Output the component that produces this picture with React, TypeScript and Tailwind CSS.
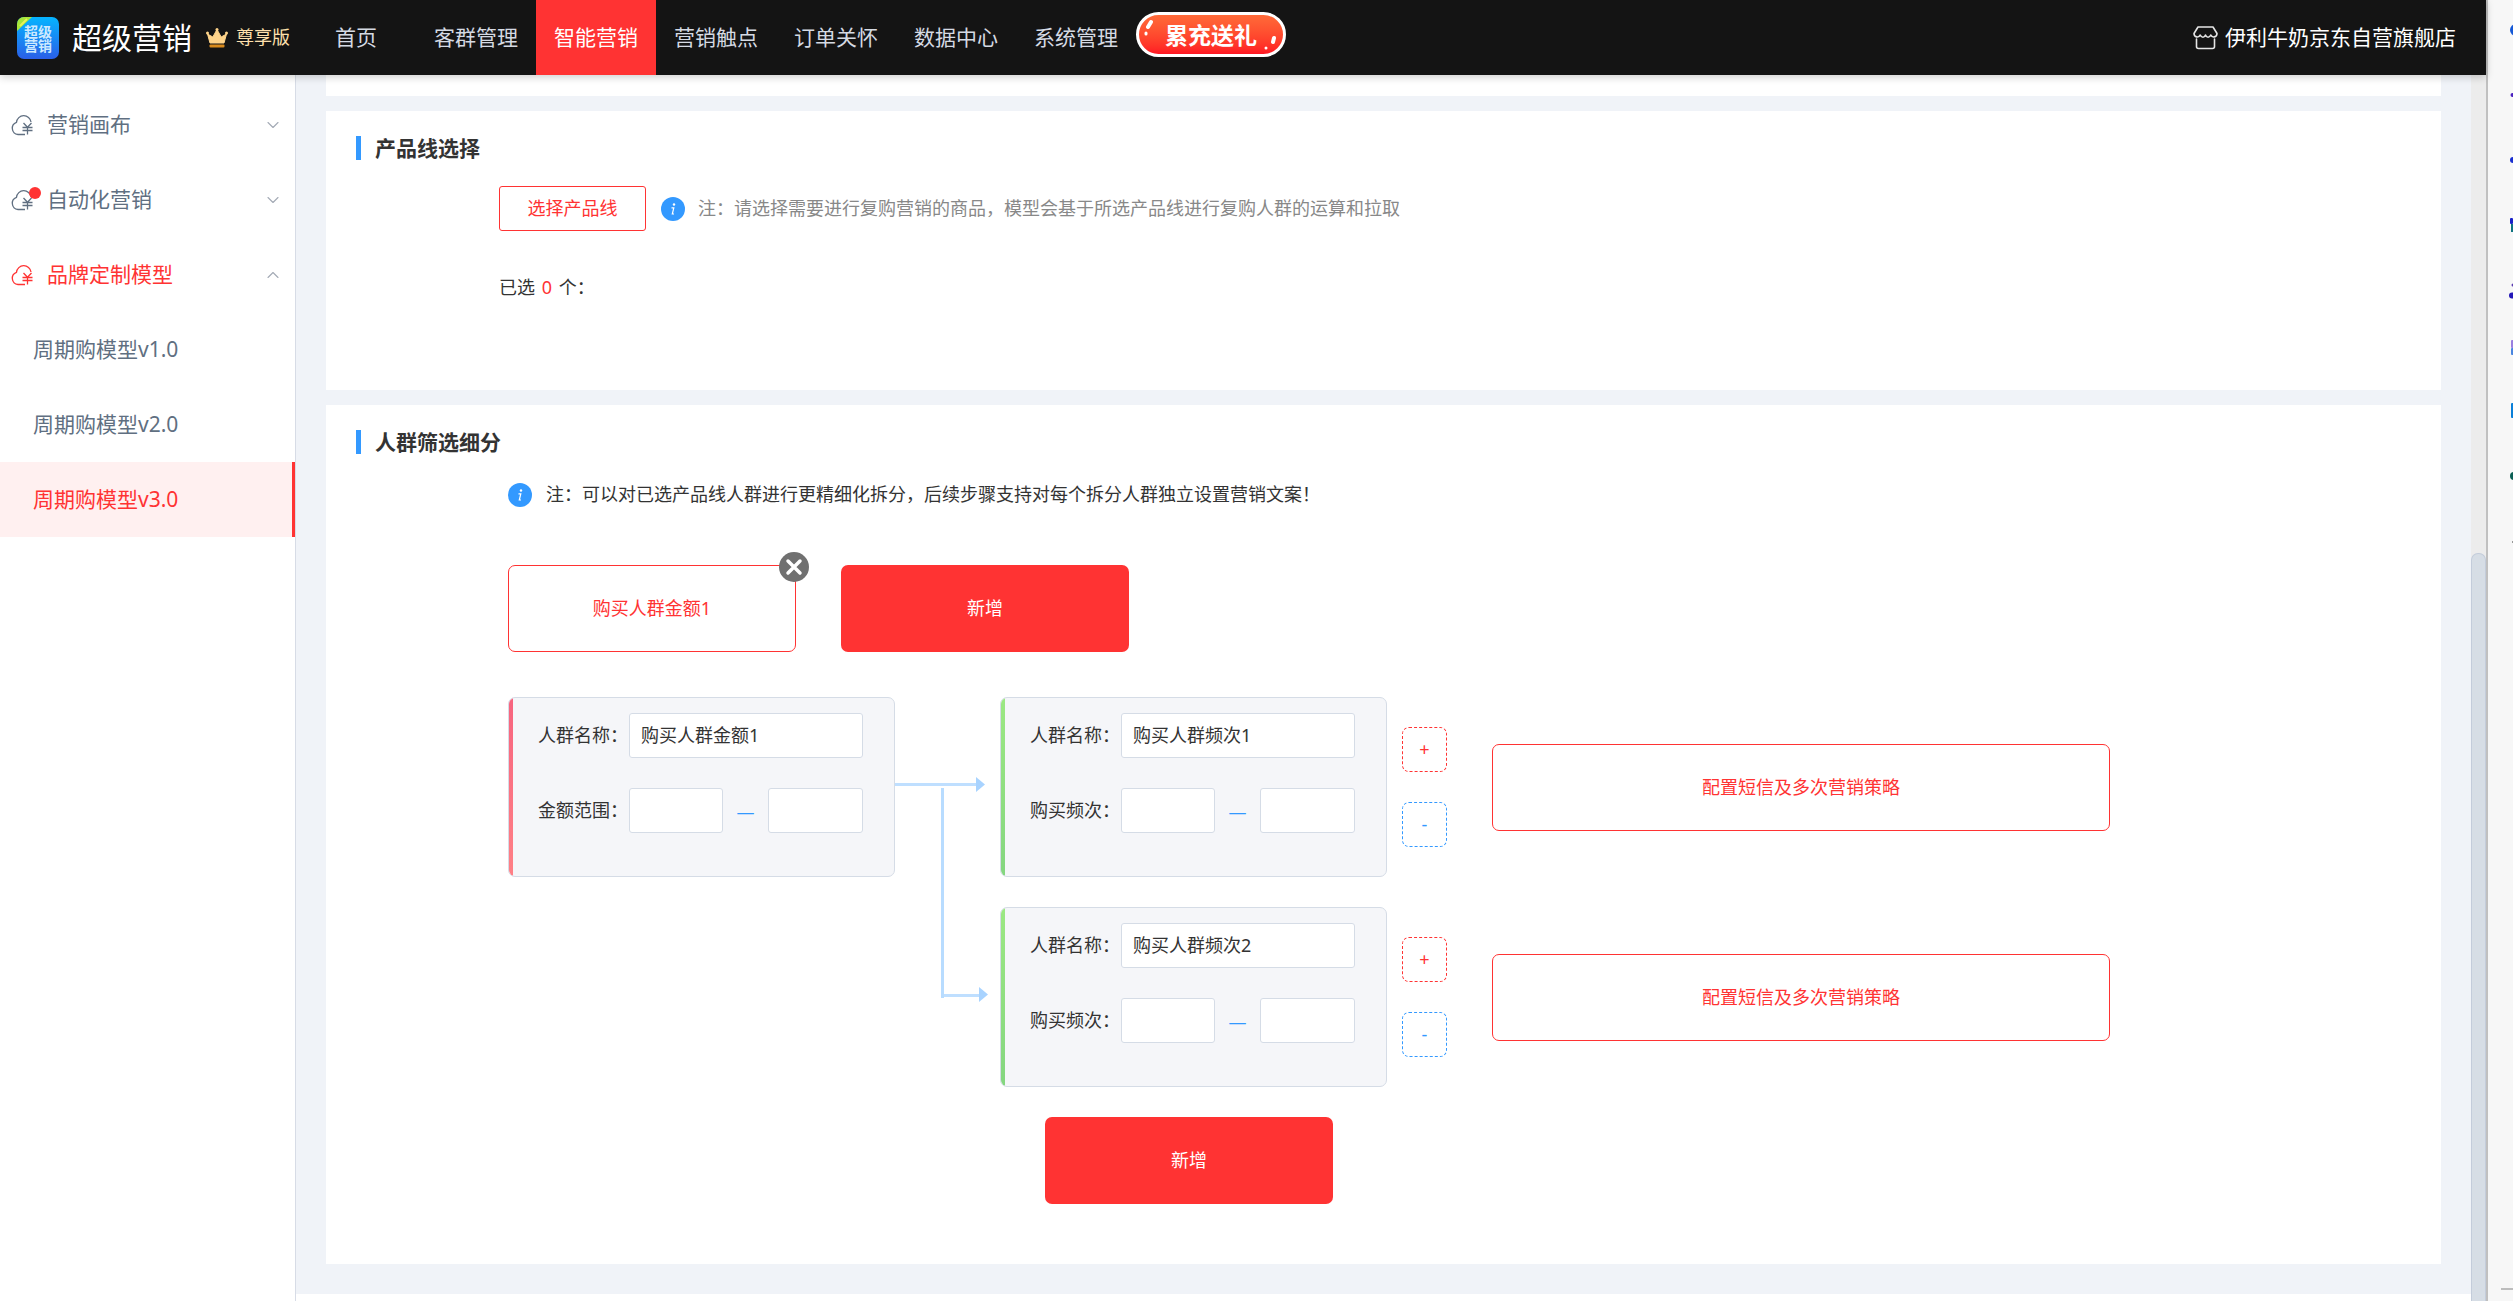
/**
 * Cycle purchase model page: product line selection and audience segmentation.
 *
 * @module App
 */
import React from "react";
import { ChevronDown, ChevronUp } from "lucide-react";

interface NavItem {
  label: string;
  active?: boolean;
}

interface MenuItem {
  label: string;
  open?: boolean;
  hasBadge?: boolean;
  children?: NavItem[];
}

interface SegmentCardProps {
  id: string;
  name: string;
  rangeLabel: string;
  barClass: string;
}

const NAV_ITEMS: NavItem[] = [
  { label: "首页" },
  { label: "客群管理" },
  { label: "智能营销", active: true },
  { label: "营销触点" },
  { label: "订单关怀" },
  { label: "数据中心" },
  { label: "系统管理" },
];

const MENU_ITEMS: MenuItem[] = [
  { label: "营销画布" },
  { label: "自动化营销", hasBadge: true },
  {
    label: "品牌定制模型",
    open: true,
    children: [
      { label: "周期购模型v1.0" },
      { label: "周期购模型v2.0" },
      { label: "周期购模型v3.0", active: true },
    ],
  },
];

const FREQUENCY_SEGMENTS = ["购买人群频次1", "购买人群频次2"];

const Logo: React.FC = () => (
  <svg width="42" height="42" viewBox="0 0 42 42" aria-hidden="true">
    <defs>
      <linearGradient id="logo-bg" x1="0" y1="0" x2="0" y2="1">
        <stop offset="0" stopColor="#05b4ff" />
        <stop offset="1" stopColor="#2a5fe8" />
      </linearGradient>
      <clipPath id="logo-clip">
        <rect width="42" height="42" rx="7" />
      </clipPath>
    </defs>
    <g clipPath="url(#logo-clip)">
      <rect width="42" height="42" fill="url(#logo-bg)" />
      <path d="M0 0H15L0 14Z" fill="#a8e63a" />
      <path d="M3 9L10 2" stroke="#e9f25a" strokeWidth="2" />
      <g fill="#cdeaff" fontSize="14" fontWeight="700" textAnchor="middle">
        <text x="21" y="20">超级</text>
        <text x="21" y="34">营销</text>
      </g>
    </g>
  </svg>
);

const CrownIcon: React.FC = () => (
  <svg width="22" height="20" viewBox="0 0 22 20" aria-hidden="true">
    <path
      d="M4 15L1.5 6L6.8 9L11 1.5L15.2 9L20.5 6L18 15Z"
      fill="#ffd48a"
      stroke="#ffd48a"
      strokeLinejoin="round"
    />
    <circle cx="1.5" cy="5" r="1.5" fill="#ffd48a" />
    <circle cx="11" cy="1.5" r="1.5" fill="#ffd48a" />
    <circle cx="20.5" cy="5" r="1.5" fill="#ffd48a" />
    <rect x="3.5" y="16.5" width="15" height="3" rx="1" fill="#d98a1c" />
  </svg>
);

const StoreIcon: React.FC = () => (
  <svg
    width="25"
    height="24"
    viewBox="0 0 25 24"
    fill="none"
    stroke="#e5e5e5"
    strokeWidth="1.6"
    strokeLinejoin="round"
    strokeLinecap="round"
    aria-hidden="true"
  >
    <path d="M5 1H20L24 7.500C24 11.500 19 12 17.800 9C16.500 12 13.500 12 12.500 9C11.500 12 8.500 12 7.200 9C6 12 1 11.500 1 7.500Z" />
    <path d="M3.500 13V20.500Q3.500 22.500 5.500 22.500H19.500Q21.500 22.500 21.500 20.500V13" />
  </svg>
);

const CloudIcon: React.FC = () => (
  <svg
    width="22"
    height="22"
    viewBox="0 0 22 22"
    fill="none"
    stroke="currentColor"
    strokeWidth="1.300"
    aria-hidden="true"
  >
    <path d="M14 20.500H7A6.300 6.300 0 0 1 5.500 8.300A7.300 7.300 0 0 1 20 8" />
    <path d="M12.500 9L16.500 13.300L20.500 9M11.500 13.500H21.500M11.500 16.500H21.500M16.500 13.500V20.500" />
  </svg>
);

const InfoIcon: React.FC = () => (
  <svg width="24" height="24" viewBox="0 0 24 24" className="shrink-0" aria-hidden="true">
    <circle cx="12" cy="12" r="12" fill="#3399ff" />
    <circle cx="13" cy="7.500" r="1.200" fill="#fff" />
    <path d="M10.500 10.800H12.800L11.300 17H13" fill="none" stroke="#fff" strokeWidth="1.200" />
  </svg>
);

const TopBar: React.FC = () => (
  <header className="relative z-10 flex h-[75px] shrink-0 items-center bg-[#141414] shadow-[0_2px_8px_rgba(0,0,0,0.2)]">
    <div className="flex w-[296px] shrink-0 items-center pl-[17px]">
      <Logo />
      <span className="ml-[13px] text-[30px] leading-[42px] text-white">超级营销</span>
      <span className="ml-[14px] flex items-center gap-2 text-[18px] text-[#ffe0ad]">
        <CrownIcon />
        尊享版
      </span>
    </div>
    <nav className="flex h-full">
      {NAV_ITEMS.map((item) => (
        <a
          key={item.label}
          href="#"
          className={`flex w-[120px] items-center justify-center text-[21px] ${
            item.active ? "bg-[#ff3333] text-white" : "text-[#d5dae3]"
          }`}
        >
          {item.label}
        </a>
      ))}
      <button
        type="button"
        className="relative mt-3 h-[45px] w-[150px] rounded-full border-[3px] border-white bg-linear-to-b from-[#ff6a38] to-[#ff1624] text-[23px] leading-[36px] font-bold text-white"
      >
        累充送礼
        <svg viewBox="0 0 144 39" className="absolute inset-0" aria-hidden="true">
          <g stroke="#fff" strokeWidth="4" strokeLinecap="round">
            <path d="M9 12L12 7M134 27L135 23" />
            <path d="M7 18V19M127 33V33" strokeWidth="3" />
          </g>
        </svg>
      </button>
    </nav>
    <a href="#" className="mr-[30px] ml-auto flex items-center gap-[7px] text-[21px] text-white">
      <StoreIcon />
      伊利牛奶京东自营旗舰店
    </a>
  </header>
);

const SideMenu: React.FC = () => (
  <aside className="w-[296px] shrink-0 border-r border-[#d7dce6] bg-white pt-3 text-[21px] text-[#606f81]">
    {MENU_ITEMS.map((item) => (
      <div key={item.label}>
        <button
          type="button"
          aria-expanded={Boolean(item.open)}
          className={`flex h-[75px] w-full items-center pr-3 pl-[11px] ${
            item.open ? "text-[#ff3333]" : ""
          }`}
        >
          <span className="relative mr-[14px]">
            <CloudIcon />
            {item.hasBadge && (
              <span className="absolute -top-0.5 -right-2 size-3 rounded-full bg-[#ff3333]" />
            )}
          </span>
          {item.label}
          {item.open ? (
            <ChevronUp className="ml-auto size-5 text-[#a3aab5]" strokeWidth={1.3} />
          ) : (
            <ChevronDown className="ml-auto size-5 text-[#a3aab5]" strokeWidth={1.3} />
          )}
        </button>
        {item.children?.map((child) => (
          <a
            key={child.label}
            href="#"
            className={`flex h-[75px] items-center pl-[33px] ${
              child.active ? "border-r-[3px] border-[#ff3333] bg-[#fff0f0] text-[#ff3333]" : ""
            }`}
          >
            {child.label}
          </a>
        ))}
      </div>
    ))}
  </aside>
);

const SectionTitle: React.FC<{ children: React.ReactNode }> = ({ children }) => (
  <h2 className="flex h-6 items-center gap-[14px] text-[21px] font-bold text-[#333333]">
    <span className="h-6 w-[5px] bg-[#3399ff]" />
    {children}
  </h2>
);

const SegmentCard: React.FC<SegmentCardProps> = ({ id, name, rangeLabel, barClass }) => (
  <div className="flex h-[180px] w-[387px] shrink-0 overflow-hidden rounded-[7px] border border-[#d5dce6] bg-[#f5f6f9]">
    <span className={`w-1 shrink-0 bg-linear-to-b ${barClass}`} />
    <div className="flex flex-col gap-[30px] pt-[15px] pl-[25px]">
      <div className="flex items-center">
        <label htmlFor={`${id}-name`} className="w-[91px]">
          人群名称：
        </label>
        <input
          id={`${id}-name`}
          defaultValue={name}
          className="h-[45px] w-[234px] rounded-[3px] border border-[#d5dce6] bg-white px-[11px] pb-1"
        />
      </div>
      <div className="flex items-center">
        <label htmlFor={`${id}-min`} className="w-[91px]">
          {rangeLabel}：
        </label>
        <input
          id={`${id}-min`}
          className="h-[45px] w-[94px] rounded-[3px] border border-[#d5dce6] bg-white px-[11px]"
        />
        <span className="w-[45px] pt-1 text-center text-[#3399ff]">—</span>
        <input
          aria-label={`${rangeLabel}上限`}
          className="h-[45px] w-[95px] rounded-[3px] border border-[#d5dce6] bg-white px-[11px]"
        />
      </div>
    </div>
  </div>
);

/* Branch lines that lead from the amount card to both frequency cards. */
const Connector: React.FC = () => (
  <svg width="105" height="390" viewBox="0 0 105 390" className="shrink-0" aria-hidden="true">
    <path d="M0 87.500H82" stroke="#bfdfff" strokeWidth="3" />
    <path d="M81 80L90 87.500L81 95Z" fill="#a8d3ff" />
    <path d="M47.500 91V301" stroke="#b8dcff" strokeWidth="3" />
    <path d="M49 298.500H86" stroke="#bfdfff" strokeWidth="3" />
    <path d="M84 290L93 297.500L84 305Z" fill="#a8d3ff" />
  </svg>
);

const AddButton: React.FC = () => (
  <button type="button" className="h-[87px] w-[288px] rounded-[7px] bg-[#ff3333] text-white">
    新增
  </button>
);

const ProductLineSection: React.FC = () => (
  <section className="h-[279px] shrink-0 bg-white pt-[25px] pl-[30px]">
    <SectionTitle>产品线选择</SectionTitle>
    <div className="mt-[26px] ml-[143px] flex items-center">
      <button
        type="button"
        className="h-[45px] w-[147px] rounded-[3px] border border-[#ff3333] text-[#ff3333]"
      >
        选择产品线
      </button>
      <span className="mr-[13px] ml-[15px] flex">
        <InfoIcon />
      </span>
      <p className="text-[#888888]">
        注：请选择需要进行复购营销的商品，模型会基于所选产品线进行复购人群的运算和拉取
      </p>
    </div>
    <p className="mt-[43px] ml-[143px]">
      已选 <span className="mx-0.5 text-[#ff3333]">0</span> 个：
    </p>
  </section>
);

const AudienceSection: React.FC = () => (
  <section className="h-[859px] shrink-0 bg-white pt-[25px] pl-[30px]">
    <SectionTitle>人群筛选细分</SectionTitle>
    <div className="pl-[152px]">
      <p className="mt-[27px] flex items-center gap-[14px]">
        <InfoIcon />
        注：可以对已选产品线人群进行更精细化拆分，后续步骤支持对每个拆分人群独立设置营销文案！
      </p>
      <div className="mt-[57px] flex gap-[45px]">
        <div className="relative">
          <button
            type="button"
            className="h-[87px] w-[288px] rounded-[7px] border border-[#ff3333] text-[#ff3333]"
          >
            购买人群金额1
          </button>
          <button
            type="button"
            aria-label="删除"
            className="absolute -top-[13px] -right-[13px] size-[30px] rounded-full bg-[#707070]"
          >
            <svg viewBox="0 0 30 30" aria-hidden="true">
              <path
                d="M9 9L21 21M21 9L9 21"
                stroke="#fff"
                strokeWidth="3.500"
                strokeLinecap="round"
              />
            </svg>
          </button>
        </div>
        <AddButton />
      </div>
      <div className="mt-[45px] flex items-start">
        <SegmentCard
          id="amount"
          name="购买人群金额1"
          rangeLabel="金额范围"
          barClass="from-[#f7647f] to-[#ff8086]"
        />
        <Connector />
        <div className="flex flex-col gap-[30px]">
          {FREQUENCY_SEGMENTS.map((name, index) => (
            <div key={name} className="flex items-center">
              <SegmentCard
                id={`frequency-${index}`}
                name={name}
                rangeLabel="购买频次"
                barClass="from-[#9be883] to-[#84d680]"
              />
              <div className="mr-[45px] ml-[15px] flex flex-col gap-[30px]">
                <button
                  type="button"
                  className="size-[45px] rounded-[7px] border border-dashed border-[#ff3333] text-[#ff3333]"
                >
                  +
                </button>
                <button
                  type="button"
                  className="size-[45px] rounded-[7px] border border-dashed border-[#3399ff] text-[#3399ff]"
                >
                  -
                </button>
              </div>
              <button
                type="button"
                className="h-[87px] w-[618px] rounded-[7px] border border-[#ff3333] text-[#ff3333]"
              >
                配置短信及多次营销策略
              </button>
            </div>
          ))}
          <div className="pl-[45px]">
            <AddButton />
          </div>
        </div>
      </div>
    </div>
  </section>
);

/* Collapsed tool strip of the browser, only the left edge of its icons shows. */
const ToolStrip: React.FC = () => (
  <div className="flex w-[27px] shrink-0 justify-end border-l-2 border-[#c0c0c0] bg-[#f7f7f7]">
    <svg width="14" height="1301" viewBox="0 0 14 1301" aria-hidden="true">
      <circle cx="17" cy="30" r="6" fill="#1558d6" />
      <circle cx="13.500" cy="95" r="2" fill="#4a20c0" />
      <circle cx="14" cy="160" r="3" fill="#1a2fd0" />
      <rect x="11" y="218" width="3" height="6" rx="1" fill="#1a22c8" />
      <rect x="12" y="224" width="2" height="8" fill="#0f7480" />
      <circle cx="14" cy="285" r="1.500" fill="#5a3ab0" />
      <circle cx="13" cy="295.500" r="3" fill="#2418b8" />
      <rect x="12" y="340" width="4" height="8" rx="1" fill="#9a7fe0" />
      <rect x="12" y="348" width="4" height="7" rx="1" fill="#4a86e0" />
      <rect x="12" y="403" width="4" height="15" rx="1" fill="#0a7fd8" />
      <circle cx="15" cy="476" r="4" fill="#0b5f55" />
      <rect x="13" y="541" width="1" height="2" fill="#999" />
      <rect x="2" y="1288" width="12" height="2" fill="#bdbdbd" />
    </svg>
  </div>
);

const App: React.FC = () => {
  return (
    <div className="flex h-screen overflow-hidden bg-white font-['Noto_Sans','Noto_Sans_CJK_SC',sans-serif] text-[18px] leading-[27px] text-[#333333]">
      <div className="flex min-w-0 flex-1 flex-col">
        <TopBar />
        <div className="flex min-h-0 flex-1">
          <SideMenu />
          <main className="flex min-w-0 flex-1 flex-col overflow-hidden bg-[#f0f3f8]">
            <div className="flex flex-col gap-[15px] px-[30px] pb-[30px]">
              <section className="h-[21px] shrink-0 bg-white" />
              <ProductLineSection />
              <AudienceSection />
            </div>
            <footer className="flex-1 bg-white" />
          </main>
          <div className="flex w-[15px] shrink-0 flex-col justify-end bg-[#ececec]">
            <div className="h-[61%] rounded-t-[7px] border border-b-0 border-[#c3ccda] bg-[#d6dde5]" />
          </div>
        </div>
      </div>
      <ToolStrip />
    </div>
  );
};

export default App;
